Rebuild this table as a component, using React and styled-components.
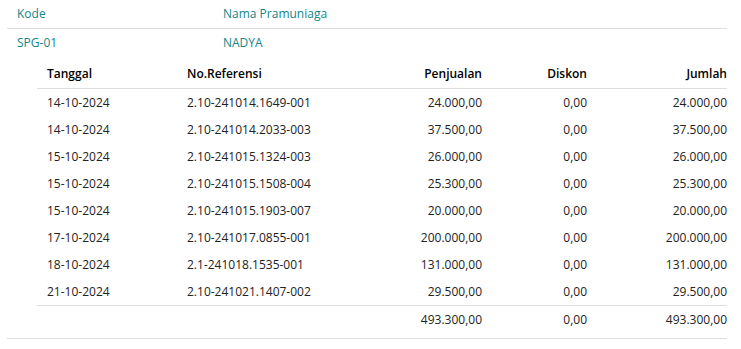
import React from "react";
import styled, { createGlobalStyle } from "styled-components";

const Global = createGlobalStyle`
  html, body { margin: 0; padding: 0; background: #fff; }
  body { font-family: "Open Sans", "Liberation Sans", sans-serif; font-size: 12px; color: #222; }
`;

const Wrapper = styled.div`
  width: 720px;
  padding-left: 7px;
`;

const MasterRow = styled.div`
  display: grid;
  grid-template-columns: 206px 1fr;
  height: ${(p) => p.$h}px;
  align-items: center;
  color: #138689;
  font-weight: 400;
  border-bottom: ${(p) => (p.$border ? "1px solid #dedede" : "none")};
`;

const MasterCell = styled.div`
  padding-left: 10px;
  line-height: ${(p) => p.$h}px;
`;

const Detail = styled.div`
  padding: 4px 0 5px 30px;
  border-bottom: 1px solid #dedede;
`;

const Row = styled.div`
  display: grid;
  grid-template-columns: 140px 200px 115px 105px 130px;
  height: ${(p) => p.$h}px;
  align-items: center;
  font-weight: ${(p) => (p.$head ? 600 : 400)};
  color: ${(p) => (p.$head ? "#000" : "#222")};
  border-bottom: ${(p) => (p.$borderBottom ? "1px solid #dedede" : "none")};
  border-top: ${(p) => (p.$borderTop ? "1px solid #dedede" : "none")};
`;

const Cell = styled.div`
  line-height: ${(p) => p.$h}px;
  white-space: nowrap;
  text-align: ${(p) => (p.$right ? "right" : "left")};
  padding-left: ${(p) => (p.$right ? 0 : 10)}px;
  padding-right: ${(p) => (p.$right && !p.$last ? 10 : 0)}px;
`;

const rows = [
  ["14-10-2024", "2.10-241014.1649-001", "24.000,00", "0,00", "24.000,00"],
  ["14-10-2024", "2.10-241014.2033-003", "37.500,00", "0,00", "37.500,00"],
  ["15-10-2024", "2.10-241015.1324-003", "26.000,00", "0,00", "26.000,00"],
  ["15-10-2024", "2.10-241015.1508-004", "25.300,00", "0,00", "25.300,00"],
  ["15-10-2024", "2.10-241015.1903-007", "20.000,00", "0,00", "20.000,00"],
  ["17-10-2024", "2.10-241017.0855-001", "200.000,00", "0,00", "200.000,00"],
  ["18-10-2024", "2.1-241018.1535-001", "131.000,00", "0,00", "131.000,00"],
  ["21-10-2024", "2.10-241021.1407-002", "29.500,00", "0,00", "29.500,00"],
];

function Line({ cells, h = 27, ...rest }) {
  return (
    <Row $h={h} {...rest}>
      {cells.map((c, i) => (
        <Cell key={i} $h={h} $right={i >= 2} $last={i === 4}>
          {c}
        </Cell>
      ))}
    </Row>
  );
}

export default function App() {
  return (
    <>
      <Global />
      <Wrapper>
        <MasterRow $h={28} $border>
          <MasterCell $h={28}>Kode</MasterCell>
          <MasterCell $h={28}>Nama Pramuniaga</MasterCell>
        </MasterRow>
        <MasterRow $h={27}>
          <MasterCell $h={27}>SPG-01</MasterCell>
          <MasterCell $h={27}>NADYA</MasterCell>
        </MasterRow>
        <Detail>
          <Line
            h={28}
            $head
            $borderBottom
            cells={["Tanggal", "No.Referensi", "Penjualan", "Diskon", "Jumlah"]}
          />
          {rows.map((r, i) => (
            <Line key={i} cells={r} />
          ))}
          <Line $borderTop cells={["", "", "493.300,00", "0,00", "493.300,00"]} />
        </Detail>
      </Wrapper>
    </>
  );
}
